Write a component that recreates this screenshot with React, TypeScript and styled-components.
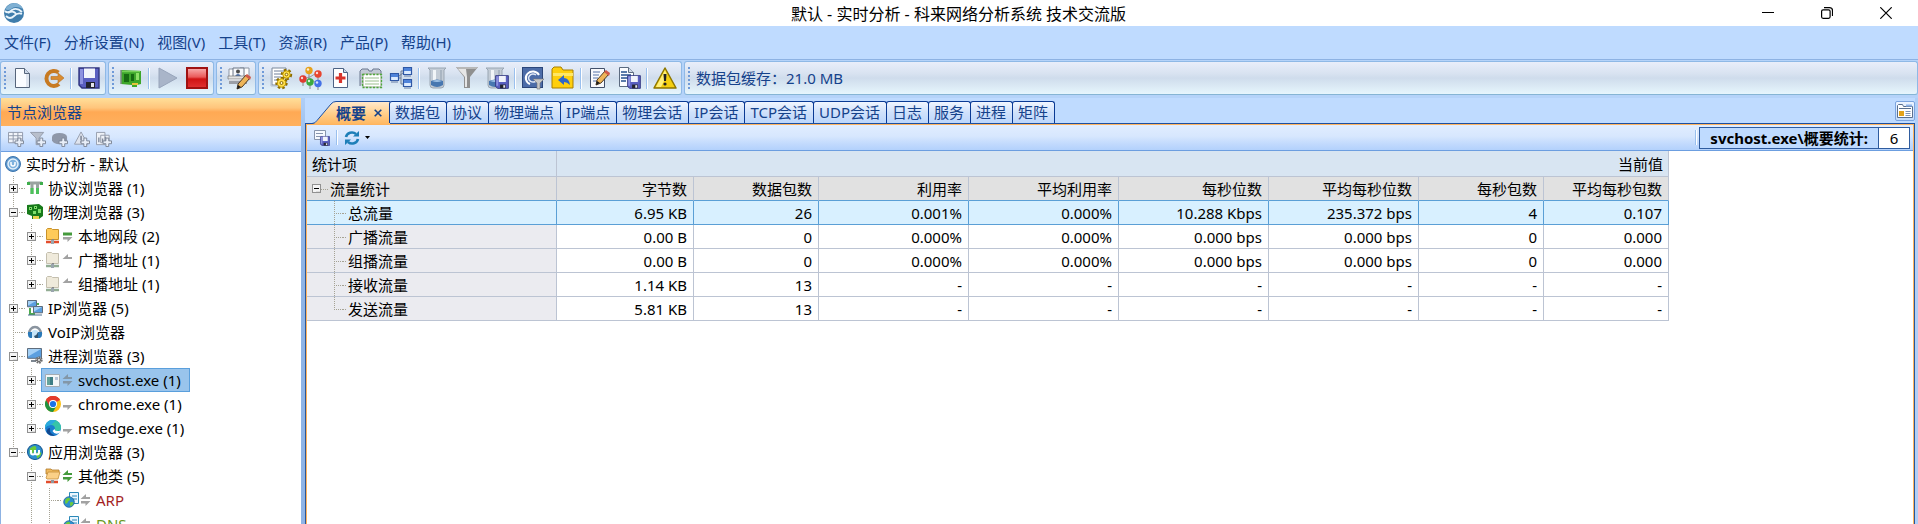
import React from "react";
import styled, { createGlobalStyle, css } from "styled-components";

const GlobalStyle = createGlobalStyle`
  * { box-sizing: border-box; }
  html, body { margin: 0; padding: 0; }
  body {
    background: #fff;
    color: #000;
    font-family: "Noto Sans", "Noto Sans CJK SC", sans-serif;
    font-size: 15px;
    line-height: 22px;
  }
  button {
    font: inherit;
    color: inherit;
    background: none;
    border: 0;
    margin: 0;
    padding: 0;
    white-space: nowrap;
  }
  svg { display: block; flex: none; }
`;

const Window = styled.div`
  display: flex;
  flex-direction: column;
  height: 100vh;
  overflow: hidden;
  background: #b0cff7;
`;

/* ---------- title bar ---------- */

const TitleBar = styled.header`
  display: grid;
  grid-template-columns: 1fr auto 1fr;
  align-items: center;
  flex: none;
  height: 26px;
  padding: 0 4px 0 3px;
  background: #fff;
`;

const Title = styled.h1`
  margin: 0;
  padding-top: 2px;
  font-size: 16px;
  font-weight: 400;
  line-height: 24px;
  white-space: nowrap;
`;

const WindowControls = styled.div`
  display: flex;
  justify-content: flex-end;
  gap: 27px;
  padding-right: 12px;
`;

const WindowButton = styled.button`
  display: flex;
  align-items: center;
  justify-content: center;
  width: 32px;
  height: 24px;
`;

/* ---------- menu ---------- */

const MenuBar = styled.nav`
  display: flex;
  align-items: center;
  flex: none;
  gap: 13px;
  height: 34px;
  padding: 0 4px 2px;
  background: #bfdbff;
  border-bottom: 1px solid #8db2e3;
  color: #15428b;
`;

/* ---------- main tool bar ---------- */

const ToolBars = styled.div`
  display: flex;
  flex: none;
  gap: 2px;
  height: 38px;
  padding: 1px 0 3px;
  background: #b5d3f9;
`;

const ToolGroup = styled.div<{ $grow?: boolean }>`
  display: flex;
  align-items: center;
  flex: ${(p) => (p.$grow ? "1 1 auto" : "none")};
  padding-right: 1px;
  border: 1px solid #8fb9e6;
  border-bottom-color: #86b5d4;
  border-radius: 3px;
  background: linear-gradient(#e9eefa 0%, #d9e3f1 35%, #cfdcec 50%, #dbe9f4 75%, #e7f6fd 100%);
  color: #15428b;
`;

const Grip = styled.span`
  width: 3px;
  height: 22px;
  margin: 0 1px 0 3px;
  background: repeating-linear-gradient(#6f9ad8 0 2px, transparent 2px 4px) 0 0 / 2px 100% no-repeat;
`;

const ToolButton = styled.button`
  display: flex;
  align-items: center;
  justify-content: center;
  width: 30px;
  height: 28px;
`;

const Separator = styled.span<{ $short?: boolean }>`
  flex: none;
  width: 6px;
  height: ${(p) => (p.$short ? 15 : 21)}px;
  background: linear-gradient(90deg, transparent 2px, #9ac0ee 2px 3px, #fff 3px 4px, transparent 4px);
`;

const BufferLabel = styled.span`
  padding-left: 4px;
  white-space: nowrap;
`;

/* ---------- body panels ---------- */

const Body = styled.main`
  display: flex;
  flex: 1;
  min-height: 0;
`;

const NodePanel = styled.aside`
  display: flex;
  flex-direction: column;
  flex: none;
  width: 301px;
  border-left: 1px solid #8db2e3;
  background: #fff;
`;

const PanelTitle = styled.h2`
  flex: none;
  height: 28px;
  margin: 0;
  padding: 0 6px;
  background: linear-gradient(#ffdf99 0%, #ffc57c 35%, #ffa954 50%, #ffb05e 100%);
  color: #15428b;
  font-size: 15px;
  font-weight: 400;
  line-height: 28px;
`;

const barBackground = css`
  background: linear-gradient(#e1edff 0%, #d7e7fe 45%, #c2dafd 75%, #b3d1fc 100%);
`;

const NodeTools = styled.div`
  display: flex;
  align-items: center;
  flex: none;
  gap: 6px;
  height: 26px;
  padding: 0 7px;
  border-bottom: 1px solid #6c9ee0;
  ${barBackground}
`;

const SmallTool = styled.button`
  display: flex;
  align-items: center;
  gap: 5px;
  height: 20px;
`;

const Splitter = styled.div`
  flex: none;
  width: 4px;
  background: linear-gradient(#b0cff7 0, #8fb4e6 60px);
`;

/* ---------- tree ---------- */

const Tree = styled.div`
  flex: 1;
  min-height: 0;
  overflow: hidden;
`;

const TreeRow = styled.div`
  display: flex;
  align-items: center;
  height: 24px;
  padding-left: 3px;
  white-space: nowrap;
`;

type GuideKind = "blank" | "line" | "tee" | "end" | "boxTop" | "box" | "boxEnd";

const vDots = "repeating-linear-gradient(#a5a294 0 1px, transparent 1px 2px)";
const hDots = "repeating-linear-gradient(90deg, #a5a294 0 1px, transparent 1px 2px)";

const guideBackground: Record<GuideKind, string> = {
  blank: "none",
  line: `${vDots} 9px 0 / 1px 100% no-repeat`,
  tee: `${vDots} 9px 0 / 1px 100% no-repeat, ${hDots} 9px 12px / 9px 1px no-repeat`,
  end: `${vDots} 9px 0 / 1px 12px no-repeat, ${hDots} 9px 12px / 9px 1px no-repeat`,
  boxTop: `${hDots} 14px 12px / 4px 1px no-repeat`,
  box: `${vDots} 9px 0 / 1px 100% no-repeat, ${hDots} 9px 12px / 9px 1px no-repeat`,
  boxEnd: `${vDots} 9px 0 / 1px 12px no-repeat, ${hDots} 9px 12px / 9px 1px no-repeat`,
};

const GuideCell = styled.span<{ $kind: GuideKind }>`
  display: flex;
  align-items: center;
  flex: none;
  width: 18px;
  height: 24px;
  padding-left: 5px;
  background: ${(p) => guideBackground[p.$kind]};
`;

const Connector = styled.span`
  flex: none;
  width: 5px;
  height: 24px;
  background: ${hDots} 0 12px / 4px 1px no-repeat;
`;

const NodeLabel = styled.span<{ $selected?: boolean; $color?: string; $root?: boolean }>`
  display: flex;
  align-items: center;
  gap: 1px;
  height: 24px;
  padding-right: 5px;
  padding-left: ${(p) => (p.$root ? 1 : 0)}px;
  color: ${(p) => p.$color ?? "#000"};
  ${(p) =>
    p.$selected &&
    css`
      margin-left: -4px;
      padding: 0 8px 0 3px;
      border: 1px solid #5a9fdc;
      background: #99c4ec;
    `}
`;

const NodeText = styled.span`
  padding-left: 4px;
`;

const Expander = ({ open }: { open?: boolean }) => (
  <button type="button" aria-label={open ? "折叠" : "展开"}>
    <svg width="9" height="9" viewBox="0 0 9 9" shapeRendering="crispEdges">
      <rect x=".5" y=".5" width="8" height="8" fill="#f4f4f4" stroke="#919191" />
      <rect x="4" y="7" width="4" height="1" fill="#ddd" />
      <rect x="2" y="4" width="5" height="1" fill="#000" />
      {!open && <rect x="4" y="2" width="1" height="5" fill="#000" />}
    </svg>
  </button>
);

const Guide = ({ kind, open }: { kind: GuideKind; open?: boolean }) => (
  <GuideCell $kind={kind}>{kind.startsWith("box") && <Expander open={open} />}</GuideCell>
);

/* ---------- work area ---------- */

const WorkArea = styled.section`
  display: flex;
  flex-direction: column;
  flex: 1;
  min-width: 0;
  padding-right: 3px;
`;

const TabStrip = styled.div`
  display: flex;
  align-items: flex-start;
  flex: none;
  height: 26px;
  padding: 3px 0 0 7px;
  background: #bfdbff;
  border-bottom: 1px solid #1c4fa0;
  color: #15428b;
`;

const Tab = styled.button`
  height: 22px;
  margin-left: -1px;
  padding: 0 6px 0 5px;
  border: 1px solid #0a3a94;
  border-bottom: 0;
  border-radius: 3px 3px 0 0;
  background: linear-gradient(#f1f6ff, #cfe1fb 50%, #bcd6fb);
  line-height: 21px;
`;

const ActiveTab = styled.div`
  display: flex;
  height: 23px;
`;

const ActiveTabBody = styled.div`
  display: flex;
  align-items: center;
  gap: 8px;
  height: 23px;
  padding-right: 8px;
  border-top: 1px solid #1c4fa0;
  background: linear-gradient(#ffe9cb, #ffd08e 50%, #ffb862);
`;

const TabName = styled.button`
  height: 21px;
  font-weight: 700;
  line-height: 20px;
`;

const TabMenu = styled.button`
  display: flex;
  align-items: center;
  justify-content: center;
  width: 20px;
  height: 20px;
  margin-left: auto;
  border: 1px solid #7ba4df;
  border-radius: 2px;
  background: linear-gradient(#edf4ff, #c3dbfb);
`;

const View = styled.div`
  display: flex;
  flex-direction: column;
  flex: 1;
  min-width: 0;
  min-height: 0;
  border: solid #ffb45f;
  border-width: 1px 1px 0;
  background: #fff;
`;

const ViewFrame = styled.div`
  display: flex;
  flex: 1;
  min-height: 0;
  border: solid #2b5797;
  border-width: 0 1px;
`;

const ViewTools = styled.div`
  display: flex;
  align-items: center;
  flex: none;
  gap: 4px;
  height: 26px;
  padding: 0 3px 0 7px;
  border-bottom: 1px solid #6c9ee0;
  ${barBackground}
`;

const Counter = styled.div`
  display: flex;
  align-items: stretch;
  height: 22px;
  border: 1px solid #2f5c9f;
  background: #bfdbff;
  line-height: 20px;
`;

const CounterLabel = styled.label`
  padding: 0 10px;
  font-weight: 700;
  white-space: nowrap;
`;

const CounterValue = styled.output`
  width: 31px;
  border-left: 1px solid #2f5c9f;
  background: #fff;
  text-align: center;
`;

const CounterSlot = styled.div`
  display: flex;
  align-items: center;
  margin-left: auto;
`;

/* ---------- statistics table ---------- */

const Stats = styled.table`
  width: 1362px;
  table-layout: fixed;
  border-collapse: separate;
  border-spacing: 0;
  white-space: nowrap;
`;

const HeadCell = styled.th<{ $left?: boolean }>`
  height: 26px;
  padding: 0 5px;
  border: solid #bcc4d3;
  border-width: 0 1px 1px 0;
  background: #d8e5f2;
  font-weight: 400;
  text-align: ${(p) => (p.$left ? "left" : "right")};
`;

const NameCell = styled.th`
  height: 24px;
  padding: 0;
  border: solid #bcc4d3;
  border-width: 0 1px 1px 0;
  background: #ebebf0;
  font-weight: 400;
  text-align: left;
`;

const ValueCell = styled.td`
  height: 24px;
  padding: 0 6px;
  border: solid #bcc4d3;
  border-width: 0 1px 1px 0;
  text-align: right;
`;

const StatRow = styled.tr<{ $tone?: "group" | "selected" }>`
  ${(p) =>
    p.$tone === "group" &&
    css`
      & > * { background: #e1e1e1; border-bottom-color: #5a9fd6; }
    `}
  ${(p) =>
    p.$tone === "selected" &&
    css`
      & > * { background: #d8f0ff; border-color: #5a9fd6; }
    `}
`;

const NameInner = styled.div`
  display: flex;
  align-items: center;
  height: 23px;
  overflow: hidden;
`;

/* ---------- icons ---------- */

const I = ({ s = 24, children }: { s?: number; children: React.ReactNode }) => (
  <svg width={s} height={s} viewBox={`0 0 ${s} ${s}`} aria-hidden="true">
    {children}
  </svg>
);

const Floppy = ({ x, y, s }: { x: number; y: number; s: number }) => (
  <g transform={`translate(${x} ${y}) scale(${s / 22})`}>
    <path d="M1 1h20v20H4l-3-3z" fill="#5a5fc0" stroke="#30357f" strokeWidth="1.4" />
    <path d="M2 2h3v15H2z" fill="#8d92e0" />
    <path d="M6 1.5h11V11H6z" fill="#f1f3fb" />
    <path d="M8 15h9v6H8z" fill="#23242e" />
    <path d="M13 16h3v4h-3z" fill="#e5e5ee" />
  </g>
);

const Sheet = ({ x = 0, y = 0, w = 15, h = 20 }: { x?: number; y?: number; w?: number; h?: number }) => (
  <g transform={`translate(${x} ${y})`}>
    <path d={`M.5.5h${w - 6}l5 5v${h - 6}H.5z`} fill="#fbfcff" stroke="#5c6b80" />
    <path d={`M${w - 5.5}.5v5h5`} fill="#cfd9e8" stroke="#5c6b80" />
  </g>
);

const Beaker = ({ x }: { x: number }) => (
  <g transform={`translate(${x} 1)`}>
    <path d="M0 1h18l-2 2v15q0 3-3 3H5q-3 0-3-3V3z" fill="#c3ccd6" stroke="#9aa6b3" />
    <path d="M5 3h3v16H5z" fill="#f1f5f8" />
    <path d="M12 3h2v12h-2z" fill="#a9b5c2" />
    <path d="M3 14q6-3 12 0v4q-6 4-12 0z" fill="#4777b0" />
    <path d="M4 14q5-2 10 0-5 2-10 0z" fill="#9ec1e6" />
  </g>
);

const Funnel = () => (
  <g>
    <path d="M1 1h22l-8 10v11H9V11z" fill="#8f8f8f" />
    <path d="M3 3h8l1 8v10h-2V11z" fill="#e6e6e6" />
    <path d="M1 1h22l-2 2H3z" fill="#b8b8b8" />
  </g>
);

const Pencil = ({ x, y }: { x: number; y: number }) => (
  <g transform={`translate(${x} ${y})`}>
    <path d="M0 14l1-5L9 0l4 3-8 9z" fill="#eeb558" stroke="#3c2a15" strokeWidth=".9" />
    <path d="M8 1l2-2 4 3-1 3z" fill="#cf5a4a" />
    <path d="M0 14l1-4 3 2z" fill="#1c1c1c" />
  </g>
);

const Gear = ({ x, y, r }: { x: number; y: number; r: number }) => (
  <g>
    <circle cx={x} cy={y} r={r} fill="none" stroke="#8a6b00" strokeWidth="3.4" strokeDasharray="2.2 1.8" />
    <circle cx={x} cy={y} r={r - 0.3} fill="#ffdf4a" stroke="#c39b00" />
    <circle cx={x} cy={y} r={r / 3} fill="#fff8d0" stroke="#8a6b00" />
  </g>
);

const Pin = ({ x, y, c }: { x: number; y: number; c: string }) => (
  <g>
    <path d={`M${x} ${y}v7`} stroke="#888" />
    <circle cx={x} cy={y} r="3.7" fill={c} />
    <circle cx={x - 1} cy={y - 1} r="1.2" fill="#fff" opacity=".8" />
  </g>
);

const Host = ({ x, y }: { x: number; y: number }) => (
  <g transform={`translate(${x} ${y})`}>
    <path d="M.5.5h8v7h-8z" fill="#dcebff" stroke="#2f58a5" strokeWidth="1.2" />
    <path d="M1 1h7v3H1z" fill="#4f83da" />
    <path d="M1 9h7" stroke="#667fa8" />
  </g>
);

const icons = {
  doc: (
    <I>
      <path d="M4.500 2.500h9l5 5v14h-14z" fill="#fafcff" stroke="#56657b" />
      <path d="M13.500 2.500v5h5" fill="#cdd8e8" stroke="#56657b" />
      <path d="M15 8h3v13h-3z" fill="#dfe6f0" />
    </I>
  ),
  go: (
    <I>
      <path d="M17.500 6.500A7.500 7.500 0 1 0 18 18" fill="none" stroke="#c77a22" strokeWidth="4" />
      <path d="M10 10.500h7V7l6 5-6 5v-3.500h-7z" fill="#d98b30" stroke="#b96f1c" strokeWidth=".6" />
    </I>
  ),
  save: <I><Floppy x={1} y={1} s={22} /></I>,
  adapter: (
    <I>
      <path d="M2 4l20 1v13l-4 1v2h-5v-2L2 18z" fill="#3da62a" />
      <path d="M2 4v14" stroke="#7d8c86" strokeWidth="1.500" />
      <path d="M5 8h5v8H5zM12 8h3v7h-3z" fill="#166b12" />
      <path d="M17 7h3v7h-3z" fill="#8ee068" />
      <path d="M3 5.500h18" stroke="#76d058" strokeWidth="1.500" />
      <path d="M13 18h6" stroke="#e6c23c" strokeWidth="2" />
    </I>
  ),
  play: <I><path d="M4 2l18 10L4 22z" fill="#a9b5c9" stroke="#98a5bb" /></I>,
  stop: (
    <I>
      <defs>
        <linearGradient id="stop" x1="0" y1="0" x2="0" y2="1">
          <stop offset="0" stopColor="#f9b0b0" />
          <stop offset=".45" stopColor="#ea5a5a" />
          <stop offset=".55" stopColor="#d01313" />
          <stop offset="1" stopColor="#e23333" />
        </linearGradient>
      </defs>
      <rect x="2" y="2" width="20" height="20" fill="url(#stop)" stroke="#a01212" strokeWidth="2" />
    </I>
  ),
  profile: (
    <I>
      <path d="M2 3h8v10H2zM13 2h9v9h-9z" fill="#fdfdfd" stroke="#8c95a5" />
      <path d="M6 2h11v9H6z" fill="#f5f7fb" stroke="#6c7686" />
      <circle cx="11" cy="5.500" r="2" fill="#4b4b4b" /><path d="M8 10q3-4 6 0z" fill="#4b6ea8" />
      <path d="M1 10h20l1 3H1z" fill="#e4e4e4" stroke="#777" strokeWidth=".7" />
      <path d="M2 13h18v5H2z" fill="#9a9ea6" /><path d="M2 13h18v2H2z" fill="#d5d7db" />
      <Pencil x={10} y={9} />
    </I>
  ),
  settings: (
    <I>
      <path d="M3 2h14v17H3z" fill="#fff" stroke="#7b889c" />
      <path d="M5 5h10M5 8h10M5 11h7M5 14h5" stroke="#6f7e99" />
      <path d="M2 5v15h8" fill="none" stroke="#b5bfd0" />
      <Gear x={17.500} y={8.500} r={4} /><Gear x={12.500} y={17} r={4.500} />
    </I>
  ),
  pins: (
    <I>
      <path d="M4 13l7-2 8-5M11 16l-2-5 8 6" stroke="#999" fill="none" />
      <Pin x={10} y={4.500} c="#e6a11b" /><Pin x={19} y={8} c="#e8452f" /><Pin x={4} y={13} c="#e03a2f" />
      <Pin x={11} y={16} c="#3ba93d" /><Pin x={19} y={17.500} c="#4472e6" />
    </I>
  ),
  medical: (
    <I>
      <path d="M4.500 2.500h10l4 4v15h-14z" fill="#fff" stroke="#4d6284" />
      <path d="M14.500 2.500v4h4" fill="#cdd8e8" stroke="#4d6284" />
      <path d="M11.500 7v10M6.500 12h10" stroke="#d8342c" strokeWidth="3.200" />
    </I>
  ),
  report: (
    <I>
      <path d="M1 20V5l2-2h6l1 2h3l1-2h6l2 2v3" fill="#c3cad6" stroke="#6a768e" />
      <path d="M4 8h18v13H4z" fill="#fff" stroke="#9aa88f" />
      <path d="M3.500 8.500h19v13h-19z" fill="none" stroke="#4fa83c" strokeWidth="1.300" strokeDasharray="2 1.500" />
      <path d="M6 12h14M6 15h14M6 18h14" stroke="#9bbf8e" />
    </I>
  ),
  hosts: (
    <I>
      <path d="M9 12h3V5h4M12 12v6h4M9 11l6-5" fill="none" stroke="#6d7b92" />
      <Host x={1} y={7} /><Host x={14} y={1} /><Host x={14} y={13} />
    </I>
  ),
  beaker: <I><Beaker x={3} /></I>,
  funnel: <I><Funnel /></I>,
  beakerSave: <I><Beaker x={1} /><Floppy x={10} y={9} s={14} /></I>,
  search: (
    <I>
      <rect x="1.500" y="1.500" width="20" height="20" fill="#4c6ca8" stroke="#2c467a" />
      <path d="M9 18A7 6.500 0 1 1 18 9" fill="none" stroke="#fff" strokeWidth="2" />
      <path d="M16 14a4.500 4 0 1 1-1-5" fill="none" stroke="#dfe8f7" strokeWidth="1.500" />
      <path d="M12 13h11l-4 4v6h-3v-6z" fill="#c8c8c8" stroke="#777" strokeWidth=".6" />
    </I>
  ),
  folder: (
    <I>
      <path d="M1 3l2-2h7l2 3h10v18H1z" fill="#ffcf0c" stroke="#a87f00" />
      <path d="M2 7h20v3H2z" fill="#ffe765" />
      <path d="M7 14l6-5v3q5 0 6 7-3-3-6-3v3z" fill="#2f66c8" />
    </I>
  ),
  edit: (
    <I>
      <path d="M3.500 2.500h14v19h-14z" fill="#f8f9fc" stroke="#43506a" />
      <path d="M6 6h7M6 9h6M6 12h5M6 15h4" stroke="#5673a8" />
      <Pencil x={9} y={5} />
    </I>
  ),
  docSave: (
    <I>
      <Sheet x={2} y={1} w={15} h={20} />
      <path d="M4 6h6M4 9h10M4 12h10M4 15h5" stroke="#27508f" strokeWidth="1.500" />
      <Floppy x={10} y={9} s={14} />
    </I>
  ),
  warning: (
    <I>
      <path d="M12 2l11 20H1z" fill="#f4cf10" stroke="#8d7600" strokeWidth="1.500" strokeLinejoin="round" />
      <path d="M12 4l2 5-6 12H3z" fill="#fff07a" />
      <path d="M10.500 8h3l-.500 7h-2z" fill="#222" /><circle cx="12" cy="18" r="1.600" fill="#222" />
    </I>
  ),
};

const AddBadge = () => (
  <path d="M10.500 7.500h3v3h3v3h-3v3h-3v-3h-3v-3h3z" fill="#e8eef8" stroke="#7c8596" />
);

const nodeTools: [string, React.ReactNode][] = [
  ["添加到表格", <path d="M.5 1.500h15v11H.5zM.5 5h15M.5 8.500h15M5.500 1.500v11M10.500 1.500v11" fill="#f2f5fb" stroke="#8f98aa" />],
  ["添加过滤器", <path d="M.5 1.500h14l-5 6v7h-3v-7z" fill="#b8bfcc" stroke="#949cab" />],
  ["添加图表", <path d="M0 6q1-4 8-4t8 4v4q-2 4-8 4T0 10z" fill="#8e97a9" />],
  ["添加警报", <><path d="M7.500 1l7 13H.5z" fill="#dfe4ee" stroke="#949cab" /><path d="M7.500 5v5M7.500 11v1.500" stroke="#737c8e" strokeWidth="1.500" /></>],
  ["添加报表", <><path d="M.5 1.500h9v13h-9zM5 4.500h9v8H5z" fill="#eef1f7" stroke="#949cab" /><path d="M3 12V7M7 12V8M10 11V6" stroke="#838c9e" strokeWidth="1.500" /></>],
];

const FolderNet = ({ fill, line, base }: { fill: string; line: string; base: string }) => (
  <I s={16}>
    <path d="M1.500 1.500l1-1h4l1 1h6v10h-12z" fill={fill} stroke={line} />
    <path d="M8 11v3" stroke="#888" strokeWidth="2" />
    <path d="M1 14h13" stroke={base} strokeWidth="2.500" />
    <path d="M6 12h3v4H6z" fill="#9aa5ad" />
  </I>
);

const Monitor = ({ x, y, w }: { x: number; y: number; w: number }) => (
  <g transform={`translate(${x} ${y})`}>
    <path d={`M.5.500h${w}v${w * 0.7}H.5z`} fill="#5b9fdf" stroke="#5f6d7d" />
    <path d={`M1 1h${w - 1}L1 ${w * 0.6}z`} fill="#a4d0f5" />
  </g>
);

const Globe = ({ cx, cy, r }: { cx: number; cy: number; r: number }) => (
  <g transform={`translate(${cx} ${cy}) scale(${r / 7})`}>
    <circle r="7" fill="#2c8fd0" stroke="#1c5e98" />
    <path d="M-5-3q4-4 6-2 1 3-2 4-1 4-4 3zM1 1q3-2 5 0-1 4-4 5z" fill="#6ccb3a" />
  </g>
);

const treeIcons = {
  root: (
    <I s={16}>
      <circle cx="8" cy="8" r="7.500" fill="#5d97cd" stroke="#3c74ad" />
      <circle cx="8" cy="8" r="5" fill="#7fb2de" stroke="#e2f0fb" strokeWidth="1.500" />
      <path d="M6 6v2a2 2 0 0 0 4 0V6" fill="none" stroke="#fff" strokeWidth="1.500" />
    </I>
  ),
  protocol: (
    <I s={16}>
      <path d="M1 3h14M5 4v10M10.500 4v10" stroke="#9aa3a0" strokeWidth="3" />
      <path d="M5 8v6M10.500 8v6" stroke="#4cc25a" strokeWidth="3" />
      <path d="M0 2h3v3H0zM13 2h3v3h-3z" fill="#3fae4c" />
    </I>
  ),
  physical: (
    <I s={16}>
      <path d="M0 1l12-1 4 3v9l-4 3H5v-3L0 10z" fill="#187a1b" />
      <path d="M2 3h3v3H2zM7 2h3v3H7zM6 7h3v3H6zM11 5h3v4h-3z" fill="#7fe06b" />
      <path d="M6 12h6v3H6z" fill="#e9d24d" />
      <path d="M3 4h1v1H3zM8 3h1v1H8z" fill="#0b420d" />
    </I>
  ),
  folderOn: <FolderNet fill="#ffcb5a" line="#c9922a" base="#e34d2c" />,
  folderOff: <FolderNet fill="#efeadb" line="#c4bfae" base="#93ad94" />,
  ip: <I s={16}><path d="M3 8v6h5M10 4h2" stroke="#4dab50" strokeWidth="2" fill="none" /><Monitor x={0} y={0} w={9} /><Monitor x={6} y={6} w={9} /><path d="M1 15h14" stroke="#4c6f8d" /></I>,
  voip: (
    <I s={16}>
      <path d="M2 10a6 7 0 0 1 12 0" fill="none" stroke="#8a949f" strokeWidth="2.500" />
      <circle cx="8" cy="10" r="4" fill="#c6e5f8" />
      <path d="M1 8h4v6H3q-2-1-2-3zM11 8h4v3q0 2-2 3h-2z" fill="#2a79b8" />
      <path d="M7 12q3-1 4-4v6H8z" fill="#31546f" />
    </I>
  ),
  process: <I s={16}><Monitor x={0} y={0} w={14} /><path d="M4 13h5" stroke="#7d8791" strokeWidth="2" /><circle cx="12" cy="12" r="2.700" fill="#ddd" stroke="#6c6c6c" strokeWidth="2" strokeDasharray="1.600 .8" /><circle cx="12" cy="12" r="1.600" fill="none" stroke="#6c6c6c" /></I>,
  exe: (
    <I s={16}>
      <path d="M.5 2.500h14v12H.5z" fill="#f4f6f7" stroke="#a4abb2" />
      <path d="M2 5h6v8H2z" fill="#3e7d84" /><path d="M2 5h3v8H2z" fill="#65a49c" />
      <path d="M10 5h3v3h-3z" fill="#b6c4d8" />
    </I>
  ),
  chrome: (
    <I s={16}>
      <circle cx="8" cy="8" r="8" fill="#fbc116" />
      <path d="M8 8L1.070 4A8 8 0 0 1 14.930 4z" fill="#e33b2e" />
      <path d="M8 8L1.070 4A8 8 0 0 0 8 16L11.500 10z" fill="#229342" />
      <path d="M8 4h6.930A8 8 0 0 0 1.070 4L4.500 10z" fill="#e33b2e" />
      <circle cx="8" cy="8" r="4" fill="#fff" /><circle cx="8" cy="8" r="3.100" fill="#1a73e8" />
    </I>
  ),
  edge: (
    <I s={16}>
      <circle cx="8" cy="8" r="8" fill="#1a7fd0" />
      <path d="M0 8A8 8 0 0 1 16 7.500q0 3.500-4 3.500-3 0-2-2 0-4-4-4-4 0-6 3z" fill="#36c5a8" />
      <path d="M0 7A8 8 0 0 1 11 .6L6 5Q2 5 0 8z" fill="#2ba9e0" />
      <path d="M5 8q-1 6 5 7.500-6 1-8.500-3.500Q2 8 5 8z" fill="#11498f" />
      <path d="M9.500 9q0 3 6 1.500l-1 2.500q-5 2-7-2z" fill="#fff" />
    </I>
  ),
  app: (
    <I s={16}>
      <Globe cx={8} cy={8} r={7.500} />
      <path d="M4 6v2.500q0 2 2 2t2-2V6M8 8.500q0 2 2 2t2-2V6" fill="none" stroke="#fff" strokeWidth="2" />
    </I>
  ),
  otherFolder: (
    <I s={16}>
      <path d="M1 1h5l1 1h7v4H1z" fill="#f0b95c" stroke="#b07a28" strokeWidth=".8" />
      <path d="M1 10l2-6h12l-2 7H2z" fill="#fbd087" stroke="#c48e3a" strokeWidth=".8" />
      <path d="M1 14h12" stroke="#e34d2c" strokeWidth="2.500" /><path d="M6 12h3v3H6z" fill="#8f979d" />
    </I>
  ),
  netDoc: (
    <I s={16}>
      <path d="M6.500.500h9v11h-9z" fill="#eaf6ff" stroke="#2b88b8" />
      <path d="M9 4h5M9 7h5" stroke="#2b88b8" />
      <Globe cx={6} cy={10} r={5.300} />
    </I>
  ),
};

const green = "#459a3c";
const grey = "#a2a2a2";

const Traffic = ({ up, down, segment }: { up?: string; down?: string; segment?: boolean }) => (
  <svg width="11" height="16" viewBox="0 0 11 16" aria-hidden="true">
    {segment && <path d="M1 4.500h9v3H1z" fill={green} />}
    {up && <path d="M.5 7L6 2v3h4v2z" fill={up} />}
    {down && <path d="M1 9h9.500L5.500 14v-2.500H1z" fill={down} />}
  </svg>
);

/* ---------- data ---------- */

type Node = {
  guides: GuideKind[];
  open?: boolean;
  icon: keyof typeof treeIcons;
  traffic?: React.ReactNode;
  text: string;
  selected?: boolean;
  color?: string;
};

const nodes: Node[] = [
  { guides: [], icon: "root", text: "实时分析 - 默认" },
  { guides: ["box"], icon: "protocol", text: "协议浏览器 (1)" },
  { guides: ["box"], open: true, icon: "physical", text: "物理浏览器 (3)" },
  { guides: ["line", "box"], icon: "folderOn", traffic: <Traffic segment down={grey} />, text: "本地网段 (2)" },
  { guides: ["line", "box"], icon: "folderOff", traffic: <Traffic up={grey} />, text: "广播地址 (1)" },
  { guides: ["line", "boxEnd"], icon: "folderOff", traffic: <Traffic up={grey} />, text: "组播地址 (1)" },
  { guides: ["box"], icon: "ip", text: "IP浏览器 (5)" },
  { guides: ["tee"], icon: "voip", text: "VoIP浏览器" },
  { guides: ["box"], open: true, icon: "process", text: "进程浏览器 (3)" },
  { guides: ["line", "box"], icon: "exe", traffic: <Traffic up="#8397a8" down="#8397a8" />, text: "svchost.exe (1)", selected: true },
  { guides: ["line", "box"], icon: "chrome", traffic: <Traffic down={grey} />, text: "chrome.exe (1)" },
  { guides: ["line", "boxEnd"], icon: "edge", traffic: <Traffic down={grey} />, text: "msedge.exe (1)" },
  { guides: ["boxEnd"], open: true, icon: "app", text: "应用浏览器 (3)" },
  { guides: ["blank", "box"], open: true, icon: "otherFolder", traffic: <Traffic up={green} down={green} />, text: "其他类 (5)" },
  { guides: ["blank", "line", "tee"], icon: "netDoc", traffic: <Traffic up={grey} down={grey} />, text: "ARP", color: "#a31f1f" },
  { guides: ["blank", "line", "tee"], icon: "netDoc", traffic: <Traffic up={grey} down={grey} />, text: "DNS", color: "#6b9a1f" },
];

const menus = ["文件(F)", "分析设置(N)", "视图(V)", "工具(T)", "资源(R)", "产品(P)", "帮助(H)"];

type Tool = [keyof typeof icons, string] | null;

const toolGroups: Tool[][] = [
  [["doc", "新建"], ["go", "转到"], null, ["save", "保存"]],
  [["adapter", "网卡"], null, ["play", "开始"], ["stop", "停止"]],
  [["profile", "网络档案"]],
  [
    ["settings", "分析设置"], ["pins", "节点"], ["medical", "诊断"], ["report", "报表"], ["hosts", "主机"], null,
    ["beaker", "缓存"], ["funnel", "过滤器"], ["beakerSave", "保存缓存"], null,
    ["search", "查找"], ["folder", "打开目录"], null,
    ["edit", "编辑"], ["docSave", "导出"], null,
    ["warning", "警报"],
  ],
];

const tabs = ["数据包", "协议", "物理端点", "IP端点", "物理会话", "IP会话", "TCP会话", "UDP会话", "日志", "服务", "进程", "矩阵"];

const widths = [250, 137, 125, 150, 150, 150, 150, 125, 125];
const columns = ["字节数", "数据包数", "利用率", "平均利用率", "每秒位数", "平均每秒位数", "每秒包数", "平均每秒包数"];

const stats: [string, string[]][] = [
  ["总流量", ["6.95 KB", "26", "0.001%", "0.000%", "10.288 Kbps", "235.372 bps", "4", "0.107"]],
  ["广播流量", ["0.00 B", "0", "0.000%", "0.000%", "0.000 bps", "0.000 bps", "0", "0.000"]],
  ["组播流量", ["0.00 B", "0", "0.000%", "0.000%", "0.000 bps", "0.000 bps", "0", "0.000"]],
  ["接收流量", ["1.14 KB", "13", "-", "-", "-", "-", "-", "-"]],
  ["发送流量", ["5.81 KB", "13", "-", "-", "-", "-", "-", "-"]],
];

/* ---------- application ---------- */

export default function App() {
  return (
    <Window>
      <GlobalStyle />
      <TitleBar>
        <svg width="22" height="22" viewBox="0 0 22 22" aria-hidden="true">
          <circle cx="11" cy="11" r="10" fill="#3f7dac" />
          <path d="M2 7q4-6 10-6 6 1 8 6-8-4-12 0-3 2-6 0z" fill="#7fb0d3" />
          <path d="M2 9q3 3 7-1 5-3 10 2M3 14q4 4 8 0 4-4 8-2M5 11q6-3 8 1" fill="none" stroke="#e9f4fb" strokeWidth="1.800" />
        </svg>
        <Title>默认 - 实时分析 - 科来网络分析系统 技术交流版</Title>
        <WindowControls>
          <WindowButton type="button" aria-label="最小化">
            <svg width="12" height="12" viewBox="0 0 12 12"><path d="M0 5.500h12" stroke="#000" /></svg>
          </WindowButton>
          <WindowButton type="button" aria-label="还原">
            <svg width="12" height="12" viewBox="0 0 12 12" fill="none" stroke="#000" strokeWidth="1.200">
              <rect x=".6" y="2.800" width="8.500" height="8.500" rx="1.500" />
              <path d="M3 .6h5.500a3 3 0 0 1 3 3V9" />
            </svg>
          </WindowButton>
          <WindowButton type="button" aria-label="关闭">
            <svg width="12" height="12" viewBox="0 0 12 12"><path d="M.3.3l11.400 11.400M11.700.3L.3 11.700" stroke="#000" strokeWidth="1.200" /></svg>
          </WindowButton>
        </WindowControls>
      </TitleBar>

      <MenuBar aria-label="主菜单">
        {menus.map((m) => <button type="button" key={m}>{m}</button>)}
      </MenuBar>

      <ToolBars>
        {toolGroups.map((group, g) => (
          <ToolGroup key={g}>
            <Grip />
            {group.map((tool, i) =>
              tool ? (
                <ToolButton type="button" key={i} aria-label={tool[1]}>{icons[tool[0]]}</ToolButton>
              ) : (
                <Separator key={i} />
              ),
            )}
          </ToolGroup>
        ))}
        <ToolGroup $grow>
          <Grip />
          <BufferLabel>数据包缓存：21.0 MB</BufferLabel>
        </ToolGroup>
      </ToolBars>

      <Body>
        <NodePanel>
          <PanelTitle>节点浏览器</PanelTitle>
          <NodeTools>
            {nodeTools.map(([name, art]) => (
              <SmallTool type="button" key={name} aria-label={name}>
                <svg width="16" height="16" viewBox="0 0 17 17" aria-hidden="true">{art}<AddBadge /></svg>
              </SmallTool>
            ))}
          </NodeTools>
          <Tree role="tree" aria-label="节点浏览器">
            {nodes.map((n) => (
              <TreeRow key={n.text} role="treeitem" aria-level={n.guides.length + 1} aria-selected={!!n.selected}>
                {n.guides.map((kind, i) => <Guide key={i} kind={kind} open={n.open} />)}
                {n.guides.length > 0 && <Connector />}
                <NodeLabel $selected={n.selected} $color={n.color} $root={n.guides.length === 0}>
                  {treeIcons[n.icon]}
                  {n.traffic}
                  <NodeText>{n.text}</NodeText>
                </NodeLabel>
              </TreeRow>
            ))}
          </Tree>
        </NodePanel>
        <Splitter />

        <WorkArea>
          <TabStrip role="tablist">
            <ActiveTab>
              <svg width="24" height="23" viewBox="0 0 24 23" aria-hidden="true">
                <defs>
                  <linearGradient id="tab" x1="0" y1="0" x2="0" y2="1">
                    <stop offset="0" stopColor="#ffe9cb" />
                    <stop offset=".5" stopColor="#ffd08e" />
                    <stop offset="1" stopColor="#ffb862" />
                  </linearGradient>
                </defs>
                <path d="M0 23q3 0 5-3L19 3q2-2.500 5-2.500V23z" fill="url(#tab)" />
                <path d="M0 22.500q3 0 5-3L19 3q2-2.500 5-2.500" fill="none" stroke="#1c4fa0" />
              </svg>
              <ActiveTabBody>
                <TabName type="button" role="tab" aria-selected="true">概要</TabName>
                <button type="button" aria-label="关闭标签">
                  <svg width="8" height="8" viewBox="0 0 8 8"><path d="M.7.7l6.600 6.600M7.300.7L.7 7.300" stroke="#15428b" strokeWidth="1.600" /></svg>
                </button>
              </ActiveTabBody>
            </ActiveTab>
            {tabs.map((t) => <Tab key={t} type="button" role="tab" aria-selected="false">{t}</Tab>)}
            <TabMenu type="button" aria-label="标签列表">
              <svg width="16" height="14" viewBox="0 0 16 14">
                <path d="M.5 13.500v-12l1-1h4l1 2h9v11z" fill="#fff" stroke="#5a708f" />
                <path d="M9 .5h6v2H9z" fill="#8fb4ea" />
                <path d="M2 4.500h12" stroke="#5a708f" />
                <path d="M2 7h5v5H2z" fill="#e3a21a" />
                <path d="M8.500 7.500h5M8.500 9.500h5M8.500 11.500h5" stroke="#7d93b5" />
              </svg>
            </TabMenu>
          </TabStrip>

          <ViewFrame>
            <View>
              <ViewTools>
                <SmallTool type="button" aria-label="导出">
                  <svg width="16" height="16" viewBox="0 0 16 16">
                    <path d="M.5.500h11v9H.5z" fill="#f7faff" stroke="#8795ad" />
                    <path d="M2 3.500h7M2 6.500h4" stroke="#8795ad" />
                    <Floppy x={6} y={6} s={10} />
                  </svg>
                </SmallTool>
                <Separator $short />
                <SmallTool type="button" aria-label="刷新">
                  <svg width="16" height="16" viewBox="0 0 16 16">
                    <path d="M2 7a6 5.500 0 0 1 10-3M14 9a6 5.500 0 0 1-10 3" fill="none" stroke="#1e7fb8" strokeWidth="2.600" />
                    <path d="M9 6.500h6V1zM7 9.500H1V15z" fill="#1e7fb8" />
                  </svg>
                  <svg width="5" height="3" viewBox="0 0 5 3"><path d="M0 0h5L2.500 3z" /></svg>
                </SmallTool>
                <CounterSlot>
                  <Separator $short />
                  <Counter>
                    <CounterLabel htmlFor="total">svchost.exe\概要统计:</CounterLabel>
                    <CounterValue id="total">6</CounterValue>
                  </Counter>
                </CounterSlot>
              </ViewTools>

              <Stats>
                <colgroup>
                  {widths.map((w, i) => <col key={i} width={w} />)}
                </colgroup>
                <thead>
                  <tr>
                    <HeadCell $left scope="col">统计项</HeadCell>
                    <HeadCell colSpan={8} scope="colgroup">当前值</HeadCell>
                  </tr>
                </thead>
                <tbody>
                  <StatRow $tone="group">
                    <NameCell scope="row">
                      <NameInner><Guide kind="boxTop" open /><Connector />流量统计</NameInner>
                    </NameCell>
                    {columns.map((c) => <ValueCell key={c}>{c}</ValueCell>)}
                  </StatRow>
                  {stats.map(([name, values], r) => (
                    <StatRow key={name} $tone={r === 0 ? "selected" : undefined}>
                      <NameCell scope="row">
                        <NameInner>
                          <Guide kind="blank" />
                          <Guide kind={r === stats.length - 1 ? "end" : "tee"} />
                          <Connector />
                          {name}
                        </NameInner>
                      </NameCell>
                      {values.map((v, i) => <ValueCell key={i}>{v}</ValueCell>)}
                    </StatRow>
                  ))}
                </tbody>
              </Stats>
            </View>
          </ViewFrame>
        </WorkArea>
      </Body>
    </Window>
  );
}
